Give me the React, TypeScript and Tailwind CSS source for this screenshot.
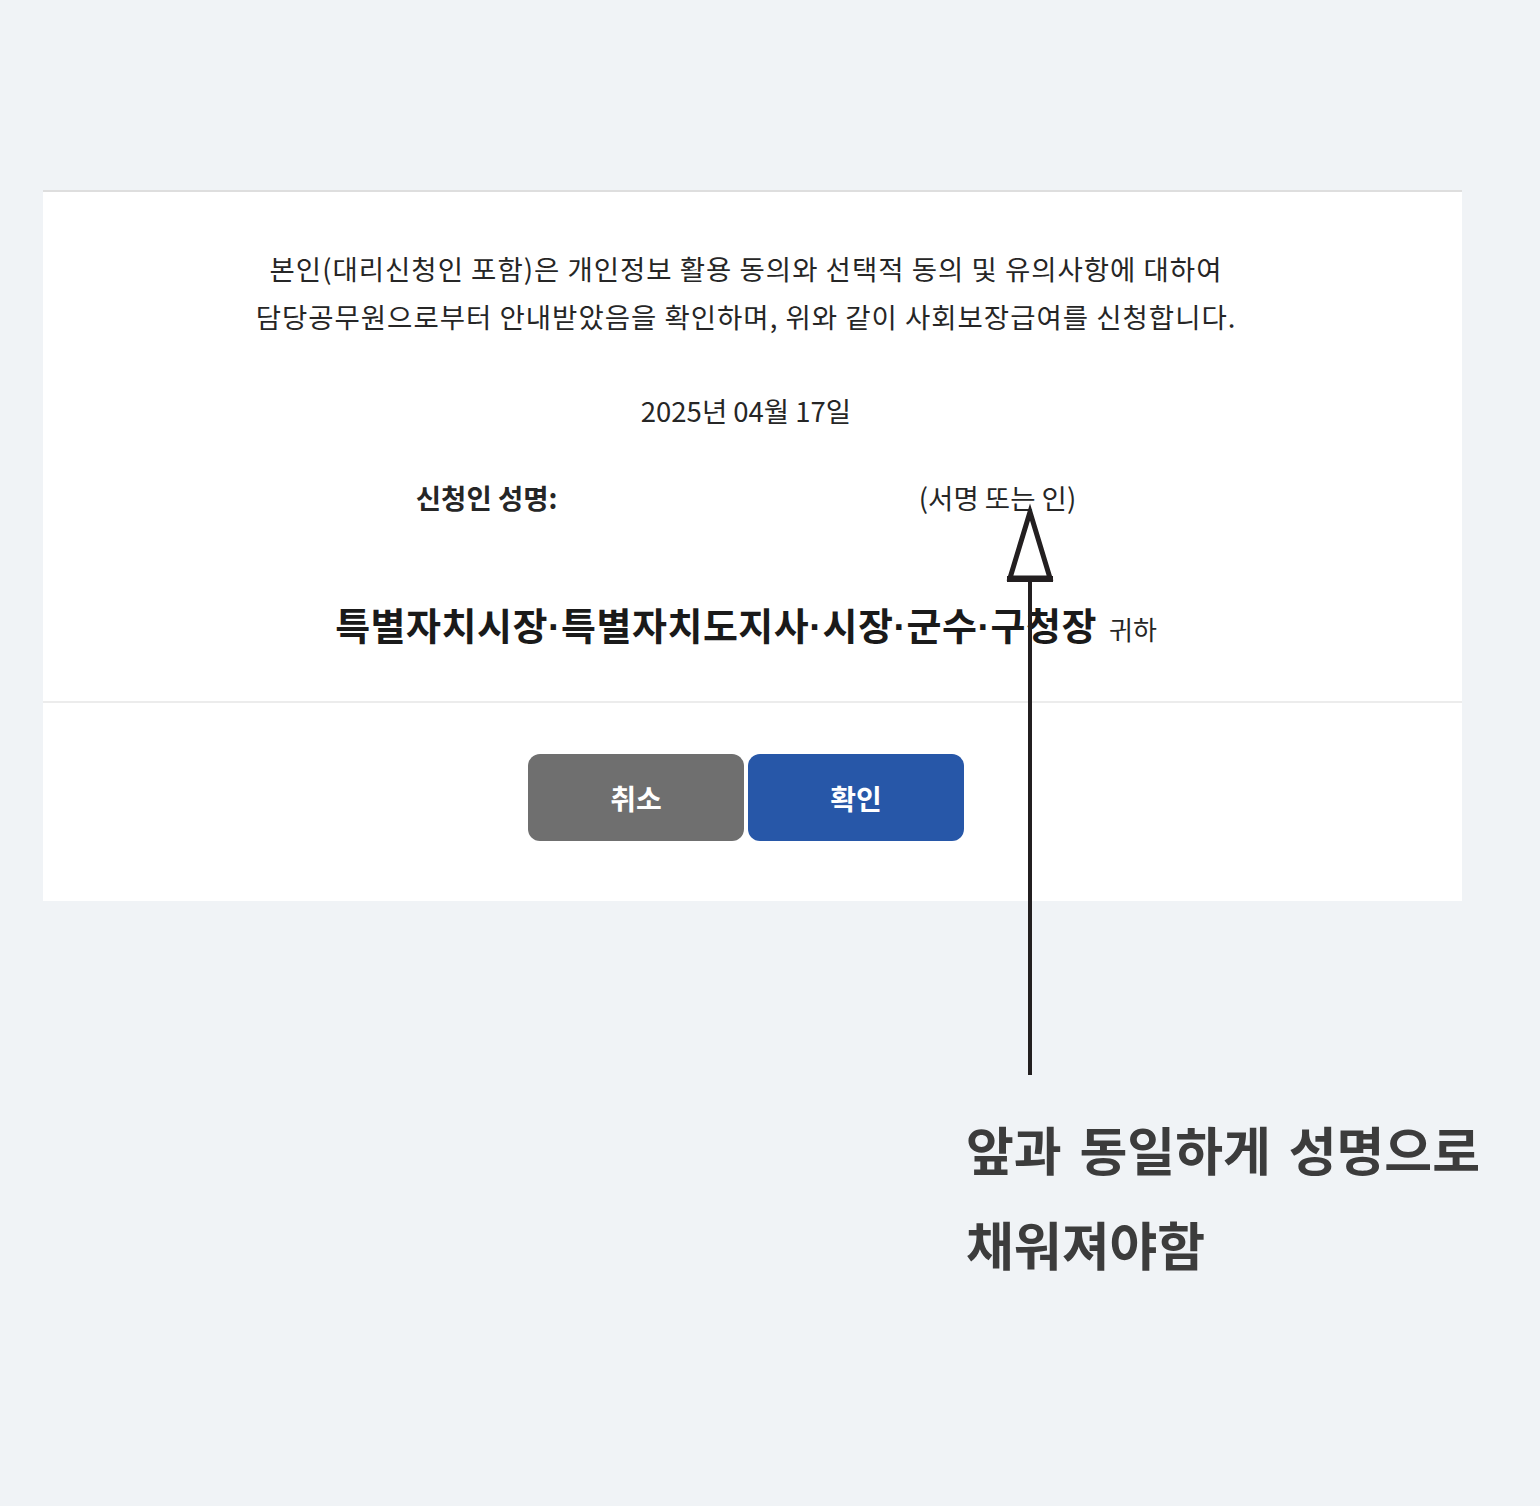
import React from "react";

const font = { fontFamily: '"Noto Sans CJK KR", "Noto Sans", sans-serif' };

const Dot = () => <span className="font-['Liberation_Sans',sans-serif]">·</span>;

const Arrow = () => {
  return (
    <svg
      className="absolute left-[1000px] top-[500px]"
      width="60"
      height="580"
      viewBox="0 0 60 580"
      fill="none"
    >
      <line x1="30" y1="80" x2="30" y2="575" stroke="#231f20" strokeWidth="4" />
      <polygon
        points="30,12 10,78 50,78"
        stroke="#231f20"
        strokeWidth="5"
        strokeLinejoin="miter"
        fill="white"
      />
      <rect x="7" y="76" width="46" height="6" fill="#231f20" />
    </svg>
  );
};

const App = () => {
  return (
    <div className="relative w-full min-h-[1506px] bg-[#f0f3f6] overflow-hidden pt-[190px]" style={font}>
      <div className="ml-[43px] w-[1419px] bg-white border-t-2 border-[#dedede]">
        <div className="pr-[13px] pt-[52px] pb-[53px] flex flex-col items-center text-[#262626]">
          <p className="text-[27.5px] leading-[48px] text-center tracking-[1px]">
            본인(대리신청인 포함)은 개인정보 활용 동의와 선택적 동의 및 유의사항에 대하여
            <br />
            담당공무원으로부터 안내받았음을 확인하며, 위와 같이 사회보장급여를 신청합니다.
          </p>
          <p className="mt-[46px] text-[27.5px] leading-[48px]">2025년 04월 17일</p>
          <div className="mt-[39px] flex text-[27.5px] leading-[48px]">
            <span className="w-[503px] font-bold">신청인 성명:</span>
            <span>(서명 또는 인)</span>
          </div>
          <div className="mt-[79px] flex items-baseline gap-[12px] h-[48px] leading-[48px]">
            <span className="text-[38px] font-bold text-[#1a1a1a] tracking-[0.5px]">
              특별자치시장<Dot />특별자치도지사<Dot />시장<Dot />군수<Dot />구청장
            </span>
            <span className="text-[26px]">귀하</span>
          </div>
        </div>
        <div className="border-t-2 border-[#ececec] pr-[13px] pt-[51px] pb-[60px] flex justify-center gap-[4px]">
          <button className="w-[216px] h-[87px] rounded-[12px] bg-[#6f6f6f] text-white text-[28px] font-bold">
            취소
          </button>
          <button className="w-[216px] h-[87px] rounded-[12px] bg-[#2757a8] text-white text-[28px] font-bold">
            확인
          </button>
        </div>
      </div>
      <div className="ml-[966px] mt-[200px] text-[52px] leading-[95px] font-bold text-[#3c3c3c] [word-spacing:6px]">
        앞과 동일하게 성명으로
        <br />
        채워져야함
      </div>
      <Arrow />
    </div>
  );
};

export default App;
